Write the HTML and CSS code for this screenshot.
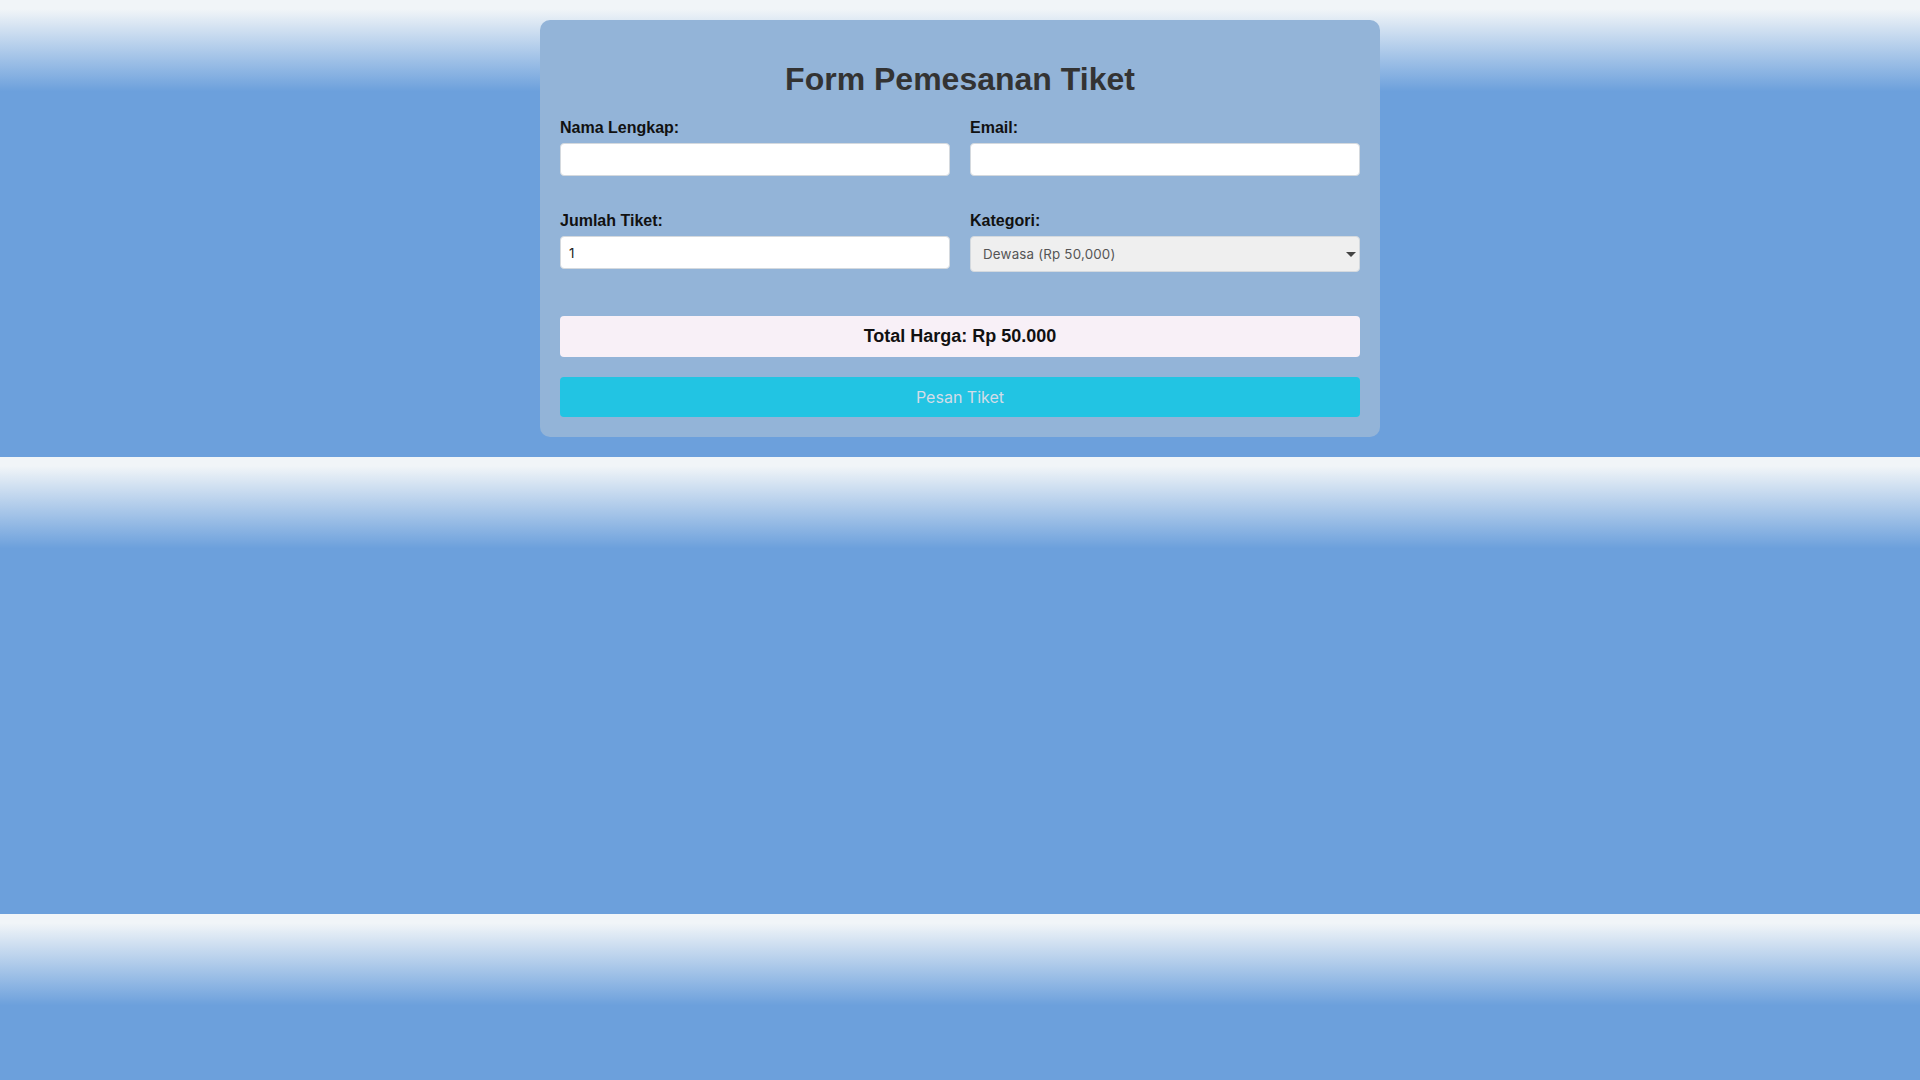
FILE: index.html
```html
<!DOCTYPE html>
<html lang="id">
<head>
<meta charset="utf-8">
<title>Form Pemesanan Tiket</title>
<link rel="stylesheet" href="styles.css">
</head>
<body>
<div class="container">
  <h2 class="title">Form Pemesanan Tiket</h2>
  <form class="form" onsubmit="return false;">
    <div class="grid">
      <div class="group">
        <label class="label" for="nama">Nama Lengkap:</label>
        <input class="input" type="text" id="nama">
      </div>
      <div class="group">
        <label class="label" for="email">Email:</label>
        <input class="input" type="email" id="email">
      </div>
      <div class="group">
        <label class="label" for="jumlah">Jumlah Tiket:</label>
        <input class="input" type="number" id="jumlah" value="1">
      </div>
      <div class="group">
        <label class="label" for="kategori">Kategori:</label>
        <div class="select-wrap">
          <select class="select" id="kategori">
            <option>Dewasa (Rp 50,000)</option>
            <option>Anak-anak (Rp 30,000)</option>
          </select>
        </div>
      </div>
    </div>
    <div class="total">Total Harga: Rp 50.000</div>
    <button class="button" type="submit">Pesan Tiket</button>
  </form>
</div>
</body>
</html>
```

FILE: styles.css
```css
html {
  margin: 0;
}
body {
  margin: 0;
  padding: 20px 0;
  font-family: "Liberation Sans", Arial, sans-serif;
  background: linear-gradient(to bottom, #f1f5f8 0%, #f1f5f8 2%, #6ca0dc 20%, #6ca0dc 100%);
}
.container {
  width: 800px;
  margin: 0 auto;
  padding: 20px;
  background: #93b4d8;
  border-radius: 10px;
}
.title {
  margin: 21px 0 21px;
  font-size: 32px;
  font-weight: bold;
  color: #333;
  text-align: center;
}
.grid {
  display: grid;
  grid-template-columns: 1fr 1fr;
  column-gap: 20px;
  row-gap: 36px;
  align-items: start;
}
.group {
  display: flex;
  flex-direction: column;
}
.label {
  display: block;
  font-size: 16px;
  font-weight: bold;
  color: #111;
  margin-bottom: 6px;
}
.input {
  box-sizing: border-box;
  height: 33px;
  padding: 8px;
  border: 1px solid #d4d9de;
  border-radius: 4px;
  background: #fff;
  font-family: Inter, sans-serif;
  font-size: 13.33px;
  color: #222;
  outline: none;
}
.input::-webkit-outer-spin-button,
.input::-webkit-inner-spin-button {
  -webkit-appearance: none;
  margin: 0;
}
.select-wrap {
  position: relative;
}
.select-wrap::after {
  content: "";
  position: absolute;
  right: 4px;
  top: 16px;
  width: 0;
  height: 0;
  border-left: 5px solid transparent;
  border-right: 5px solid transparent;
  border-top: 5px solid #444;
  pointer-events: none;
}
.select {
  -webkit-appearance: none;
  appearance: none;
  box-sizing: border-box;
  width: 100%;
  height: 36px;
  padding: 0 12px;
  border: 1px solid #d4d9de;
  border-radius: 4px;
  background: #efefef;
  font-family: Inter, sans-serif;
  font-size: 13.33px;
  letter-spacing: 0.2px;
  color: #555;
  outline: none;
}
.total {
  margin-top: 44px;
  margin-bottom: 20px;
  padding: 10px;
  background: #f8f0f7;
  border-radius: 4px;
  font-size: 18px;
  font-weight: bold;
  color: #111;
  text-align: center;
}
.button {
  display: block;
  width: 100%;
  padding: 10px;
  border: none;
  border-radius: 4px;
  background: #22c4e3;
  color: #d3dce8;
  font-family: Inter, sans-serif;
  font-size: 16px;
  cursor: pointer;
}
```
